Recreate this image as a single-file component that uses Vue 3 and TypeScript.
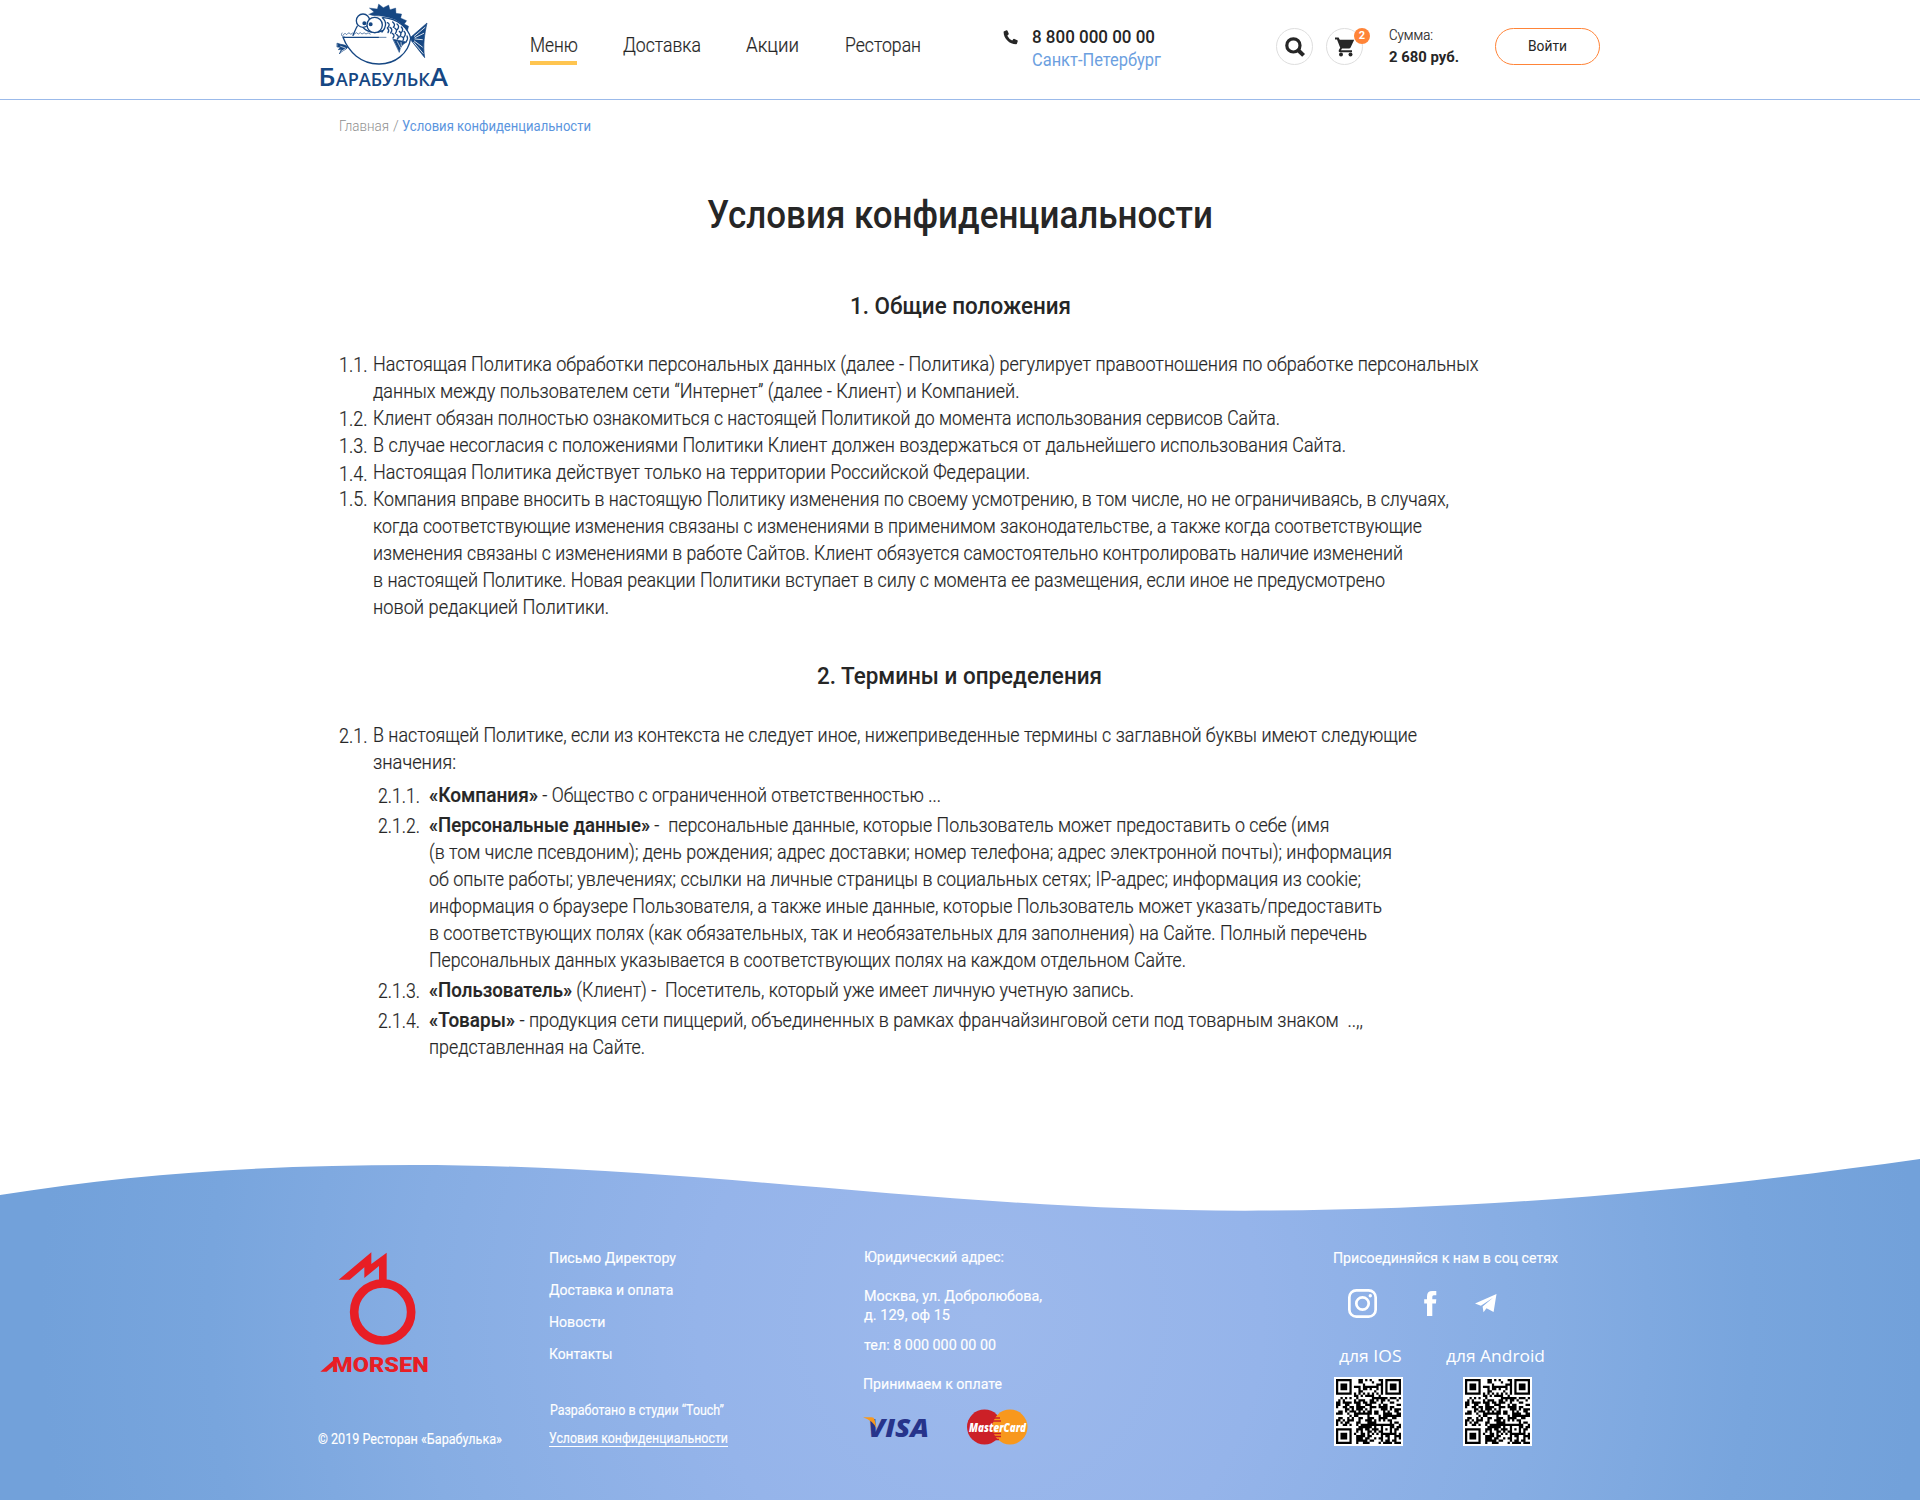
<script setup lang="ts">
import type { Directive } from 'vue'

interface Line { text: string; width: number; bold?: string; boldWidth?: number }
interface Clause { num: string; shift: number; lines: Line[] }
interface Link { text: string; width: number }

// Condenses a line of text so that it fills the given measure in pixels.
const fit = (el: HTMLElement, width: number) => {
  const natural = el.getBoundingClientRect().width
  el.style.transform = `scaleX(${(width / natural).toFixed(5)})`
  el.style.marginRight = `${(width - natural).toFixed(2)}px`
}
const vFit: Directive<HTMLElement, number> = {
  mounted: (el, binding) => fit(el, binding.value),
}

const nav = [
  { text: 'Меню', width: 48, active: true },
  { text: 'Доставка', width: 78, active: false },
  { text: 'Акции', width: 53, active: false },
  { text: 'Ресторан', width: 76, active: false },
]

const general: Clause[] = [
  { num: '1.1.', shift: 1, lines: [
    { text: 'Настоящая Политика обработки персональных данных (далее - Политика) регулирует правоотношения по обработке персональных', width: 1105.5 },
    { text: 'данных между пользователем сети “Интернет” (далее - Клиент) и Компанией.', width: 646.5 },
  ] },
  { num: '1.2.', shift: 1, lines: [{ text: 'Клиент обязан полностью ознакомиться с настоящей Политикой до момента использования сервисов Сайта.', width: 907 }] },
  { num: '1.3.', shift: 1, lines: [{ text: 'В случае несогласия с положениями Политики Клиент должен воздержаться от дальнейшего использования Сайта.', width: 973 }] },
  { num: '1.4.', shift: 2, lines: [{ text: 'Настоящая Политика действует только на территории Российской Федерации.', width: 657 }] },
  { num: '1.5.', shift: 0, lines: [
    { text: 'Компания вправе вносить в настоящую Политику изменения по своему усмотрению, в том числе, но не ограничиваясь, в случаях,', width: 1076 },
    { text: 'когда соответствующие изменения связаны с изменениями в применимом законодательстве, а также когда соответствующие', width: 1049 },
    { text: 'изменения связаны с изменениями в работе Сайтов. Клиент обязуется самостоятельно контролировать наличие изменений', width: 1030 },
    { text: 'в настоящей Политике. Новая реакции Политики вступает в силу с момента ее размещения, если иное не предусмотрено', width: 1012 },
    { text: 'новой редакцией Политики.', width: 236 },
  ] },
]

const terms: Clause[] = [
  { num: '2.1.', shift: 1, lines: [
    { text: 'В настоящей Политике, если из контекста не следует иное, нижеприведенные термины с заглавной буквы имеют следующие', width: 1044 },
    { text: 'значения:', width: 83 },
  ] },
]

const definitions: Clause[] = [
  { num: '2.1.1.', shift: 1, lines: [{ bold: '«Компания»', boldWidth: 109, text: ' - Общество с ограниченной ответственностью ...', width: 403 }] },
  { num: '2.1.2.', shift: 1, lines: [
    { bold: '«Персональные данные»', boldWidth: 221, text: ' -  персональные данные, которые Пользователь может предоставить о себе (имя', width: 679.5 },
    { text: '(в том числе псевдоним); день рождения; адрес доставки; номер телефона; адрес электронной почты); информация', width: 963 },
    { text: 'об опыте работы; увлечениях; ссылки на личные страницы в социальных сетях; IP-адрес; информация из cookie;', width: 932 },
    { text: 'информация о браузере Пользователя, а также иные данные, которые Пользователь может указать/предоставить', width: 953 },
    { text: 'в соответствующих полях (как обязательных, так и необязательных для заполнения) на Сайте. Полный перечень', width: 938 },
    { text: 'Персональных данных указывается в соответствующих полях на каждом отдельном Сайте.', width: 757 },
  ] },
  { num: '2.1.3.', shift: 1, lines: [{ bold: '«Пользователь»', boldWidth: 143, text: ' (Клиент) -  Посетитель, который уже имеет личную учетную запись.', width: 562 }] },
  { num: '2.1.4.', shift: 1, lines: [
    { bold: '«Товары»', boldWidth: 86, text: ' - продукция сети пиццерий, объединенных в рамках франчайзинговой сети под товарным знаком  ..,,', width: 848 },
    { text: 'представленная на Сайте.', width: 216 },
  ] },
]

const footerLinks: Link[] = [
  { text: 'Письмо Директору', width: 127 },
  { text: 'Доставка и оплата', width: 124.5 },
  { text: 'Новости', width: 56.5 },
  { text: 'Контакты', width: 63.5 },
]

// QR symbol, version 3: finder, alignment and timing patterns around the data modules.
const SIZE = 29
function buildCode(): string {
  let seed = 20190
  const random = () => {
    seed = (seed * 1103515245 + 12345) % 2147483648
    return seed / 2147483648
  }
  const ring = (x: number, y: number, cx: number, cy: number) => Math.max(Math.abs(x - cx), Math.abs(y - cy))
  let d = ''
  for (let y = 0; y < SIZE; y++) {
    for (let x = 0; x < SIZE; x++) {
      let dark = random() > 0.44
      if (x === 6 || y === 6) dark = (x + y) % 2 === 0
      for (const [cx, cy] of [[3, 3], [25, 3], [3, 25]]) {
        const r = ring(x, y, cx, cy)
        if (r <= 4) dark = r !== 4 && r !== 2
      }
      const a = ring(x, y, 22, 22)
      if (a <= 2) dark = a !== 1
      if (dark) d += `M${x} ${y}h1v1h-1z`
    }
  }
  return d
}
const code = buildCode()
const apps = [{ text: 'для IOS', width: 62.5, cls: 'ios' }, { text: 'для Android', width: 99, cls: 'android' }]
</script>

<template>
  <div class="page">
    <header class="header">
      <a class="logo">
        <svg width="132" height="96" viewBox="54 0 396 288">
          <g fill="none" stroke="#164783" stroke-width="4" stroke-linejoin="round" stroke-linecap="round">
            <path fill="#164783" stroke-width="1" d="M207 43L222 36 208 24 232 27 236 12 250 23 266 15 270 29 287 24 288 40 305 42 302 54 320 62 313 72 326 79 322 94C308 70 285 54 255 50C239 47 220 50 207 43Z" />
            <path d="M250 53C293 56 325 84 332 114C326 160 285 193 236 192C183 191 146 157 129 112H235" />
            <path stroke-width="2" d="M235 112H258M126 99C121 107 128 111 134 111M129 106q5-10 11-2q7-10 12-1q6-7 11-1q6-8 12 0q6-8 11 0q7-7 12 0q6-7 13 0" />
            <path d="M172 78C166 88 163 98 159 106M190 83C207 100 230 101 247 92M247 53C262 66 258 84 246 96" />
            <circle cx="189" cy="62" r="20" fill="#fff" />
            <circle cx="224" cy="75" r="23" fill="#fff" />
            <circle cx="193" cy="70" r="4" fill="#164783" /><circle cx="212" cy="73" r="4" fill="#164783" />
            <path stroke-width="4" d="M262 68q10 4 2 14M278 66q10 8 2 16M291 72q9 7 1 17M304 81q8 8 0 17M270 82q10 6 2 17M284 84q10 6 2 17M298 94q9 6 1 17M312 94q8 7 0 17M277 100q9 6 2 14M290 104q9 6 2 13M305 110q9 4 4 11M321 108q4 8-2 16M262 84q7 6 2 14" />
            <path fill="#164783" stroke-width="2" d="M280 118L320 126C307 132 300 142 298 156Z" />
            <path stroke="#fff" stroke-width="2" d="M292 125L302 144M303 127L304 137" />
            <path fill="#164783" stroke-width="2" d="M112 130C127 136 136 132 143 142C139 150 124 152 118 162L124 148L115 149L121 142L112 141Z" />
            <path stroke="#fff" stroke-width="2" d="M122 139L136 144M125 153L137 146" />
            <path fill="#164783" stroke-width="2" d="M332 112L381 69C374 101 368 135 374 173L334 122Z" />
            <path stroke="#fff" stroke-width="2.500" d="M343 109L375 82M345 113L371 100M345 117L367 119M343 123L367 141M341 127L369 160" />
          </g>
          <g class="logo-text" fill="#164783">
            <text x="55" y="259" font-size="73" textLength="52" lengthAdjust="spacingAndGlyphs">Б</text>
            <text x="107" y="259" font-size="53" textLength="283" lengthAdjust="spacingAndGlyphs">АРАБУЛЬК</text>
            <text x="390" y="259" font-size="75" textLength="54" lengthAdjust="spacingAndGlyphs">А</text>
          </g>
        </svg>
      </a>
      <nav class="nav">
        <a v-for="item in nav" :key="item.text" :class="{ active: item.active }"><span v-fit="item.width">{{ item.text }}</span></a>
      </nav>
      <div class="contact">
        <svg width="15" height="15" viewBox="0 0 15 15"><path fill="#262626" d="M1.2 1.2L3.5.2Q4.2 0 4.5.7L5.7 3.5Q6 4.1 5.5 4.6L4.3 5.7Q5.8 8.9 9.2 10.4L10.4 9.1Q10.9 8.7 11.4 8.9L14.3 10.3Q14.9 10.6 14.7 11.2L14 13.6Q13.8 14.3 13.1 14.3C6.5 14.3.6 8.6.6 2Q.6 1.5 1.2 1.2Z" /></svg>
        <div>
          <b><span v-fit="123">8 800 000 00 00</span></b>
          <a><span v-fit="129">Санкт-Петербург</span></a>
        </div>
      </div>
      <button class="round search">
        <svg width="20" height="20" viewBox="0 0 20 20" fill="none" stroke="#262626"><circle cx="8.4" cy="8.4" r="6.6" stroke-width="3.2" /><path d="M13 13L18.6 18.4" stroke-width="4" /></svg>
      </button>
      <button class="round cart">
        <svg width="20" height="20" viewBox="0 0 20 20" fill="#262626"><path d="M0 .5H3.6L4.8 2.8H19.2L15.6 10.5Q15.2 11.5 14 11.5H7L6 13.2H17V15.2H5Q3 15 4 12.8L5.2 10.7L2 2.6H0Z" /><circle cx="6" cy="17.6" r="2" /><circle cx="15.5" cy="17.6" r="2" /></svg>
        <i>2</i>
      </button>
      <div class="sum">
        <p><span v-fit="44">Сумма:</span></p>
        <b><span v-fit="70">2 680 руб.</span></b>
      </div>
      <button class="login"><span v-fit="39">Войти</span></button>
    </header>

    <main class="main">
      <div class="crumbs"><a><span v-fit="50">Главная</span></a><i>/</i><a class="here"><span v-fit="189">Условия конфиденциальности</span></a></div>
      <h1><span v-fit="506">Условия конфиденциальности</span></h1>
      <h2 class="first"><span v-fit="221">1. Общие положения</span></h2>
      <section class="clauses">
        <div v-for="c in general" :key="c.num" class="clause">
          <div class="num" :style="{ paddingTop: c.shift + 'px' }"><span v-fit="28.5">{{ c.num }}</span></div>
          <div class="lines"><p v-for="l in c.lines" :key="l.text"><span v-fit="l.width">{{ l.text }}</span></p></div>
        </div>
      </section>
      <h2 class="second"><span v-fit="285">2. Термины и определения</span></h2>
      <section class="clauses">
        <div v-for="c in terms" :key="c.num" class="clause">
          <div class="num" :style="{ paddingTop: c.shift + 'px' }"><span v-fit="28.5">{{ c.num }}</span></div>
          <div class="lines"><p v-for="l in c.lines" :key="l.text"><span v-fit="l.width">{{ l.text }}</span></p></div>
        </div>
      </section>
      <section class="clauses nested">
        <div v-for="c in definitions" :key="c.num" class="clause">
          <div class="num" :style="{ paddingTop: c.shift + 'px' }"><span v-fit="42">{{ c.num }}</span></div>
          <div class="lines">
            <p v-for="l in c.lines" :key="l.text"><b v-if="l.bold" v-fit="l.boldWidth ?? 0">{{ l.bold }}</b><span v-fit="l.width">{{ l.text }}</span></p>
          </div>
        </div>
      </section>
    </main>

    <footer class="footer">
      <svg class="wave" width="1920" height="56" viewBox="0 0 1920 56"><path fill="#fff" d="M0 0H1920V3C1700 34 1480 54.700 1245 54.700C950 54.700 700 9 412 9C270 9 137 17 0 39Z" /></svg>
      <div class="columns">
        <div class="brand">
          <svg width="112" height="126" viewBox="60 33 336 378">
            <g fill="#e81e25">
              <path d="M116 119L214 37V72L260 38V122H237V78L193 114V82L149 119Z" />
              <circle cx="248" cy="216" r="85.500" fill="none" stroke="#e81e25" stroke-width="26" />
              <path d="M61 395L104 358V375L80 395Z" />
              <text x="96" y="395" class="morsen" textLength="290" lengthAdjust="spacingAndGlyphs">MORSEN</text>
            </g>
          </svg>
          <p><span v-fit="184">© 2019 Ресторан «Барабулька»</span></p>
        </div>
        <div class="links">
          <a v-for="l in footerLinks" :key="l.text"><span v-fit="l.width">{{ l.text }}</span></a>
          <p class="studio"><span v-fit="174">Разработано в студии “Touch”</span></p>
          <p class="policy"><span v-fit="179">Условия конфиденциальности</span></p>
        </div>
        <div class="address">
          <p><span v-fit="140">Юридический адрес:</span></p>
          <p class="street"><span v-fit="178">Москва, ул. Добролюбова,</span></p>
          <p><span v-fit="86">д. 129, оф 15</span></p>
          <p class="tel"><span v-fit="132">тел: 8 000 000 00 00</span></p>
          <p class="pay"><span v-fit="139">Принимаем к оплате</span></p>
          <div class="cards">
            <svg width="70" height="28" viewBox="0 -3 70 28">
              <text x="5" y="20.500" class="visa" textLength="61" lengthAdjust="spacingAndGlyphs">VISA</text>
              <path fill="#f7981d" d="M0 1.300H8.500Q11 1.300 11.600 3.500L13.800 13Q10 4.500 0 1.300Z" />
            </svg>
            <svg width="64" height="36" viewBox="0 0 64 36">
              <circle cx="17.500" cy="18" r="17.500" fill="#cc2027" /><circle cx="43" cy="18" r="17.500" fill="#f8981d" />
              <path stroke="#cc2027" stroke-width="1.600" d="M27 9H33M26 12H34M25.500 24.500H34M26 27.500H34M28 30.500H32" />
              <text x="2" y="22.500" class="mc" textLength="57" lengthAdjust="spacingAndGlyphs">MasterCard</text>
            </svg>
          </div>
        </div>
        <div class="social">
          <p><span v-fit="225">Присоединяйся к нам в соц сетях</span></p>
          <div class="icons">
            <svg width="29" height="29" viewBox="0 0 29 29" fill="none" stroke="#fff" stroke-width="2.700"><rect x="1.350" y="1.350" width="26.300" height="26.300" rx="7" /><circle cx="14.500" cy="14.500" r="6.200" /><circle cx="22.300" cy="6.700" r="1.700" fill="#fff" stroke="none" /></svg>
            <svg width="13" height="25" viewBox="0 0 13 25"><path fill="#fff" d="M12.300 0V4.200H9.800Q8.300 4.200 8.300 5.800V8.200H12.300L11.900 12.500H8.300V25H3V12.500H.2V8.200H3V5.200Q3 0 8.300 0Z" /></svg>
            <svg width="22" height="19" viewBox="0 0 22 19"><path fill="#fff" d="M0 9.600L21.500 0 18.600 18 11.500 14.200 8.500 18.200 7.600 12.500 18 3.700 5.900 11.700Z" /></svg>
          </div>
          <div class="apps">
            <div v-for="a in apps" :key="a.text" :class="['app', a.cls]">
              <p><span v-fit="a.width">{{ a.text }}</span></p>
              <svg width="69" height="69" viewBox="-0.890 -0.890 30.780 30.780"><rect x="-1" y="-1" width="31" height="31" fill="#fff" /><path :d="code" fill="#000" /></svg>
            </div>
          </div>
        </div>
      </div>
    </footer>
  </div>
</template>

<style>
body { margin: 0; background: #fff; }
</style>

<style scoped>
.page { width: 1920px; height: 1500px; overflow: hidden; display: flex; flex-direction: column; font-family: Roboto, "Liberation Sans", sans-serif; color: #262626; }
.page * { box-sizing: border-box; }
p, h1, h2 { margin: 0; }
span, .lines b { display: inline-block; white-space: pre; transform-origin: 0 50%; }
button { padding: 0; background: #fff; font: inherit; color: inherit; }
svg { display: block; }

.header { height: 100px; flex: none; border-bottom: 1px solid #9bbaea; display: flex; align-items: flex-start; padding-left: 318px; }
.logo { width: 212px; }
.logo-text { font-family: "Open Sans", sans-serif; font-weight: 600; }
.nav { display: flex; gap: 45.500px; width: 391px; padding-top: 33px; font-size: 19.500px; font-weight: 300; line-height: 26px; -webkit-text-stroke: 0.2px; }
.nav a { height: 32px; white-space: nowrap; }
.nav .active { border-bottom: 4px solid #ffc550; width: 47px; }
.contact { display: flex; gap: 14px; margin-left: 82px; width: 273px; padding-top: 30px; }
.contact div { padding-top: 1px; margin-top: -5px; }
.contact b, .contact a { display: block; font-size: 17.500px; line-height: 23px; }
.contact b { font-weight: 500; }
.contact a { color: #6c9fdf; font-weight: 400; }
.round { position: relative; width: 37px; height: 37px; border: 1px solid #dedede; border-radius: 50%; margin-top: 28px; display: flex; align-items: center; justify-content: center; }
.cart { margin-left: 13px; }
.round i { position: absolute; left: 27px; top: -1px; width: 16px; height: 16px; border-radius: 50%; background: #ff8438; color: #fff; font: 700 11px/16px Roboto, sans-serif; text-align: center; }
.sum { margin-left: 26px; padding-top: 25px; font-size: 15px; width: 106px; }
.sum p { font-weight: 300; line-height: 21px; -webkit-text-stroke: 0.2px; }
.sum b { display: block; line-height: 22px; font-weight: 700; }
.login { width: 105px; height: 37px; margin-top: 28px; border: 1px solid #ff8438; border-radius: 19px; font-size: 15px; line-height: 35px; }

.main { height: 1059px; flex: none; padding-left: 339px; }
.crumbs { display: flex; font-size: 14.500px; line-height: 20px; font-weight: 300; padding-top: 17px; color: #8f8f8f; }
.crumbs i { font-style: normal; width: 13px; padding-left: 4px; }
.crumbs .here { color: #5b95de; font-weight: 400; }
h1 { width: 1242px; text-align: center; font-size: 38.500px; line-height: 50px; font-weight: 500; margin-top: 53px; }
h2 { width: 1242px; text-align: center; font-size: 23.500px; line-height: 32px; font-weight: 500; }
.first { margin-top: 50px; }
.second { margin-top: 39px; }
.clauses { font-size: 20px; line-height: 27px; font-weight: 300; -webkit-text-stroke: 0.2px; }
.first + .clauses { margin-top: 28.500px; }
.second + .clauses { margin-top: 30px; }
.clause { display: flex; }
.num { width: 33.500px; flex: none; height: 27px; }
.nested { padding-left: 39px; padding-top: 6px; display: flex; flex-direction: column; gap: 3px; }
.nested .num { width: 51px; }
.lines p { height: 27px; display: flex; }
.lines b { font-weight: 500; }
.lines b, .lines span { flex: none; }

.footer { height: 341px; flex: none; background: radial-gradient(circle 940px at 980px 160px, #9db9ec 0%, #95b4ea 30%, #86ade3 60%, #78a5dd 82%, #72a1da 100%); color: #fff; font-size: 15.500px; line-height: 20px; -webkit-text-stroke: 0.15px; }
.footer svg { -webkit-text-stroke: 0; }
.wave { margin-top: -3px; }
.columns { display: flex; padding-left: 318px; }
.brand { width: 231px; padding-top: 39px; font-size: 14px; }
.brand svg { margin-left: 2px; }
.brand p { margin-top: 52px; }
.links { width: 315px; padding-top: 34px; display: flex; flex-direction: column; align-items: flex-start; }
.links a { height: 32px; padding-top: 2px; }
.links .studio { font-size: 14px; margin: 26px 0 0 1px; }
.links .policy { font-size: 14px; line-height: 16px; margin-top: 10px; border-bottom: 1px solid #fff; }
.address { width: 470px; padding-top: 35px; }
.street { margin-top: 19px; margin-bottom: -1px; }
.tel { margin-top: 10px; }
.pay { margin-top: 19px; margin-left: -1px; }
.cards { display: flex; align-items: center; gap: 34px; margin: 15px 0 0 -1px; }
.visa { font: italic 800 25px "Open Sans", sans-serif; fill: #27348b; }
.mc { font: italic 800 12px "Open Sans", sans-serif; fill: #fff; }
.morsen { font: 900 63px Roboto, sans-serif; }
.social { padding-top: 36px; margin-left: -1px; }
.icons { display: flex; align-items: center; padding: 21px 0 0 15px; }
.icons svg:nth-child(2) { margin-left: 47px; }
.icons svg:nth-child(3) { margin-left: 38px; }
.apps { display: flex; gap: 60px; padding: 26px 0 0 1px; }
.app { width: 69px; }
.app p { font-family: "Open Sans", sans-serif; font-size: 16.500px; line-height: 24px; margin-bottom: 9px; white-space: nowrap; -webkit-text-stroke: 0; }
.ios p { margin-left: 5px; }
.android p { margin-left: -17px; }
</style>
